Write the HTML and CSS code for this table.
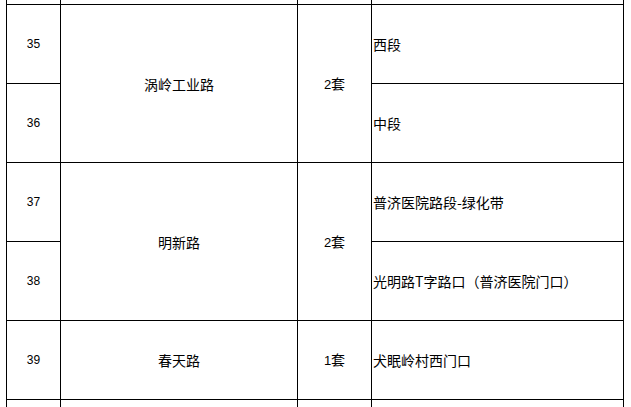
FILE: index.html
```html
<!DOCTYPE html>
<html lang="zh">
<head>
<meta charset="utf-8">
<link rel="stylesheet" href="styles.css">
</head>
<body>
<div class="page">
<table class="grid">
  <colgroup>
    <col class="c1"><col class="c2"><col class="c3"><col class="c4">
  </colgroup>
  <tr class="edge top"><td></td><td></td><td></td><td></td></tr>
  <tr class="row">
    <td class="num">35</td>
    <td class="name" rowspan="2">涡岭工业路</td>
    <td class="qty" rowspan="2"><span class="d">2</span>套</td>
    <td class="loc">西段</td>
  </tr>
  <tr class="row">
    <td class="num">36</td>
    <td class="loc">中段</td>
  </tr>
  <tr class="row">
    <td class="num">37</td>
    <td class="name" rowspan="2">明新路</td>
    <td class="qty" rowspan="2"><span class="d">2</span>套</td>
    <td class="loc">普济医院路段-绿化带</td>
  </tr>
  <tr class="row">
    <td class="num">38</td>
    <td class="loc">光明路T字路口（普济医院门口）</td>
  </tr>
  <tr class="row">
    <td class="num">39</td>
    <td class="name">春天路</td>
    <td class="qty"><span class="d">1</span>套</td>
    <td class="loc">犬眠岭村西门口</td>
  </tr>
  <tr class="edge bottom"><td></td><td></td><td></td><td></td></tr>
</table>
</div>
</body>
</html>
```
FILE: styles.css
```css
html, body {
  margin: 0;
  padding: 0;
  background: #fff;
}
.page {
  width: 631px;
  height: 407px;
  overflow: hidden;
  padding-left: 6px;
  box-sizing: border-box;
}
.grid {
  border-collapse: collapse;
  table-layout: fixed;
  width: 617px;
  font-family: "Noto Sans CJK SC", sans-serif;
  font-size: 14px;
  color: #000;
}
.c1 { width: 54px; }
.c2 { width: 237px; }
.c3 { width: 74px; }
.c4 { width: 252px; }
.grid td {
  border: 1px solid #000;
  padding: 0;
  vertical-align: middle;
  line-height: 16px;
}
.edge.top td { border-top: none; height: 4px; }
.edge.bottom td { border-bottom: none; height: 12px; }
.row { height: 79px; }
.num {
  text-align: center;
  font-family: "Liberation Sans", Arial, sans-serif;
  font-size: 12px;
}
.name { text-align: center; }
.qty { text-align: center; }
.qty .d {
  font-family: "Liberation Sans", Arial, sans-serif;
  font-size: 13px;
}
.loc {
  text-align: left;
  padding-left: 1px !important;
}
```
